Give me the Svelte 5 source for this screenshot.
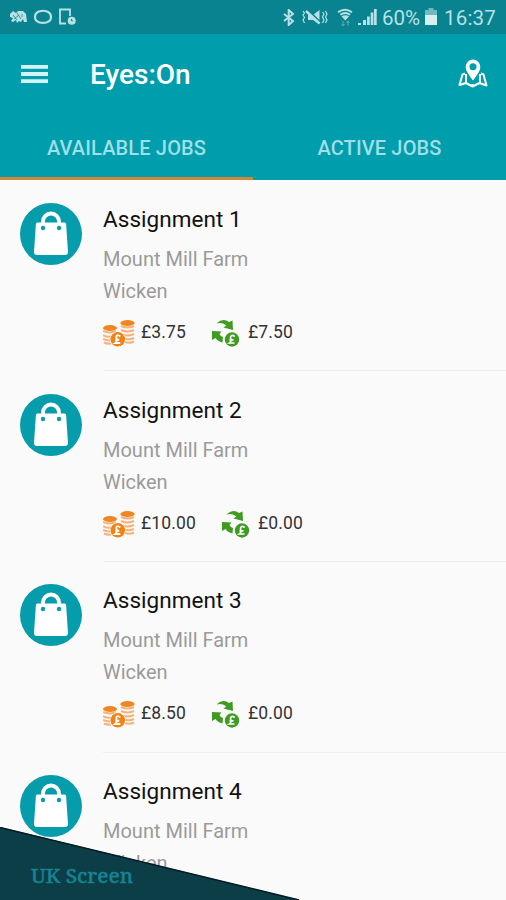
<script lang="ts">
	interface Job {
		name: string;
		place: string;
		town: string;
		fee?: string;
		refund?: string;
	}

	const tabs = ['Available jobs', 'Active jobs'];
	let activeTab = $state(0);

	const jobs: Job[] = [
		{ name: 'Assignment 1', place: 'Mount Mill Farm', town: 'Wicken', fee: '£3.75', refund: '£7.50' },
		{ name: 'Assignment 2', place: 'Mount Mill Farm', town: 'Wicken', fee: '£10.00', refund: '£0.00' },
		{ name: 'Assignment 3', place: 'Mount Mill Farm', town: 'Wicken', fee: '£8.50', refund: '£0.00' },
		{ name: 'Assignment 4', place: 'Mount Mill Farm', town: 'Wicken' }
	];
</script>

<div class="screen">
	<div class="status-bar">
		<div class="notifications">
			<svg width="19" height="16" viewBox="0 0 19 16" fill="currentColor">
				<path d="M1 5l3-3 3 2 2-2h5l3 3 1 8h-3l-1-3-2 3-2-1-2 2-1-3-3 2-2-1 2-3-3-1z" />
				<path d="M4 6l4 5M8 4l4 6M13 5v3M5 10l5-4" stroke="#148490" stroke-width="0.8" />
			</svg>
			<svg width="20" height="16" viewBox="0 0 20 16" fill="none" stroke="currentColor" stroke-width="2.2">
				<path d="M6 2.5q4-1.500 8 0q4 1.500 4 5.500t-4 5.200q-4 1.500-8 0q-4-1.200-4-5.200t4-5.500z" />
			</svg>
			<svg width="19" height="18" viewBox="0 0 19 18" fill="none" stroke="currentColor" stroke-width="1.800">
				<path d="M8 15.500H2V1.500h10V8" />
				<circle cx="13.700" cy="12.700" r="4" fill="currentColor" stroke="none" />
				<path d="M13.500 11v1.800h1.500" stroke="#148490" stroke-width="1" />
			</svg>
		</div>
		<div class="system">
			<svg class="bluetooth" width="12" height="17" viewBox="0 0 12 17" fill="none" stroke="currentColor" stroke-width="2">
				<path d="M1 5l9 7-4.300 4V1L10 5l-9 7" />
			</svg>
			<svg class="mute" width="27" height="17" viewBox="0 0 27 17" fill="none" stroke="currentColor" stroke-width="1.200">
				<path d="M2 2l1.500 2L2 6l1.500 2.500L2 11l1.500 3M21.500 3L23 5l-1.500 3 1.500 3-1.500 3M24.500 2L26 5l-1.500 3 1.500 3-1.500 3" />
				<path d="M7 6h5l6.500-5v14L12 11H7z" fill="currentColor" stroke="none" />
				<path d="M7.500 1.500l12 12" stroke="#08838f" stroke-width="2" />
				<path d="M5 2l13.500 12.500" stroke-width="2.400" />
			</svg>
			<svg class="wifi" width="17" height="19" viewBox="0 0 17 19" fill="none" stroke="currentColor" stroke-width="2">
				<path d="M1 4.200q7-5 14 0M3.300 6.700q5-3.500 9.700 0" />
				<path d="M4.500 8.200q3.800-2 7.600 0L8.300 12.500z" fill="currentColor" stroke="none" />
				<path d="M6 13v4M4.500 16L6 18l1.500-2M11 18v-4M9.500 15l1.500-2 1.500 2" stroke-width="1" opacity="0.450" />
			</svg>
			<svg class="signal" width="19" height="18" viewBox="0 0 19 18" fill="currentColor">
				<path d="M0 15h3v2H0zM5 12h3v5H5zM9 8.500h2.800V17H9zM12.700 4.500h2.700V17h-2.700zM16 1h2.700v16H16z" />
			</svg>
			<span class="percent">60%</span>
			<svg class="battery" width="12" height="18" viewBox="0 0 12 18" fill="currentColor">
				<path d="M3.500 0h5v2H12v5H0V2h3.500z" opacity="0.500" />
				<path d="M0 7h12v10H0z" />
			</svg>
			<span class="time">16:37</span>
		</div>
	</div>

	<header>
		<button class="menu-btn" aria-label="Menu">
			<svg width="27" height="20" viewBox="0 0 27 20" stroke="currentColor" stroke-width="3.800">
				<path d="M0 2.800h27M0 10h27M0 17.200h27" />
			</svg>
		</button>
		<h1>Eyes:On</h1>
		<button class="map-btn" aria-label="Map">
			<svg width="30" height="30" viewBox="0 0 30 30" fill="none" stroke="currentColor" stroke-width="2" stroke-linejoin="round">
				<path d="M7 14.500l-2.500 1L1.500 26l6.500-2 6.500 3.500 7-3.500 7 2.500-3-11-2.500-1M8 15v8.500M22 15v8.500M14.500 25v2" />
				<path d="M15 .5a7.300 7.300 0 0 0-7.300 7.400c0 4.600 4.300 9 7.300 13.600 3-4.600 7.300-9 7.300-13.600A7.300 7.300 0 0 0 15 .5zM15 4.200a3.500 3.500 0 1 1 0 7A3.500 3.500 0 0 1 15 4.200z" fill="currentColor" fill-rule="evenodd" stroke="none" />
			</svg>
		</button>
	</header>

	<nav>
		{#each tabs as tab, i}
			<button class="tab" class:active={activeTab === i} onclick={() => (activeTab = i)}>{tab}</button>
		{/each}
	</nav>

	<main>
		{#each jobs as job}
			<article>
				<svg class="bag" width="62" height="62" viewBox="0 0 62 62">
					<circle cx="31" cy="31" r="31" fill="#059dac" />
					<path d="M23 22v-3.500a8 8 0 0 1 16 0V22" fill="none" stroke="#fff" stroke-width="3.800" />
					<path d="M17.500 19.500h27q1.500 0 1.600 1.500L48 49q0 3-3 3H17q-3 0-3-3l1.900-28Q16 19.500 17.500 19.500z" fill="#fff" />
					<circle cx="23" cy="25" r="2.200" fill="#059dac" />
					<circle cx="39" cy="25" r="2.200" fill="#059dac" />
				</svg>
				<div class="details">
					<h2>{job.name}</h2>
					<p>{job.place}</p>
					<p>{job.town}</p>
					{#if job.fee}
						<div class="amounts">
							<svg class="coins" width="33" height="28" viewBox="0 0 33 28" fill="none">
								<path d="M18 7q6.500 3 13 0M18 11q6.500 3 13 0M18 15q6.500 3 13 0M20 19q6 2.500 11 0M22 23q5 1.500 9-.5M0 12q6.500 3 13 0M0 16q5 3 9.500 1M0 20q4 2 8 1.500M1 23.500q3 1.500 7 1" stroke="#f5b27c" stroke-width="2" />
								<ellipse cx="24.500" cy="4" rx="7.200" ry="3" fill="#ee8722" />
								<ellipse cx="7" cy="9" rx="7" ry="3" fill="#ee8722" />
								<circle cx="14.800" cy="20.300" r="8" fill="#fafafa" />
								<circle cx="14.800" cy="20.300" r="7.300" fill="#ee8316" />
								<path d="M17.300 17.500q-3.500-3-4 .5l.5 3q0 2-1.500 3h5M12.300 20.800h4" stroke="#fff" stroke-width="1.900" />
							</svg>
							<span class="amount">{job.fee}</span>
							<svg class="cycle" width="28" height="28" viewBox="0 0 28 28" fill="#409b22">
								<path d="M4.500 4.500Q11-1.500 17 3l3.500-1.500L21 11l-9.500-2.500 2.800-2Q10 3 4.500 4.500z" />
								<path d="M0 12l9.500.5-2 2.500q1 2.500 3.500 3l-.5 5.500q-5-1.500-7-4.500L0 21z" />
								<circle cx="20" cy="20.500" r="7.200" />
								<path d="M22.700 17.500q-3.700-2.500-4.200 1l.5 2.500q0 2-1.500 3h5M17.500 20.800h4" fill="none" stroke="#fff" stroke-width="1.700" />
							</svg>
							<span class="amount refund">{job.refund}</span>
						</div>
					{/if}
				</div>
			</article>
		{/each}
	</main>

	<div class="corner">
		<svg width="300" height="73" viewBox="0 0 300 73">
			<path d="M0 0L300 73H0z" fill="#0b3e46" />
			<path d="M0 .5L299 73" stroke="#031c23" stroke-width="1.500" />
		</svg>
		<span class="region">UK Screen</span>
	</div>
</div>

<style>
	:global(body) {
		margin: 0;
		background: #fafafa;
	}

	.screen {
		position: relative;
		width: 506px;
		height: 900px;
		overflow: hidden;
		display: flex;
		flex-direction: column;
		background: #fafafa;
		font-family: Roboto, 'Liberation Sans', sans-serif;
	}

	button {
		padding: 0;
		border: none;
		background: none;
		color: inherit;
		font: inherit;
		cursor: pointer;
	}

	svg {
		display: block;
		flex: none;
	}

	.status-bar {
		flex: none;
		height: 34px;
		box-sizing: border-box;
		padding: 0 10px 0 9px;
		display: flex;
		align-items: center;
		justify-content: space-between;
		background: #08838f;
		color: #b9e0e4;
	}

	.notifications,
	.system {
		display: flex;
		align-items: center;
	}

	.notifications {
		gap: 5px;
	}

	.bluetooth {
		margin-right: 6px;
	}

	.mute {
		margin-right: 9px;
	}

	.wifi {
		margin-right: 4px;
	}

	.signal {
		margin-right: 5px;
	}

	.percent,
	.time {
		font-size: 20.5px;
		line-height: 24px;
		padding-top: 2px;
	}

	.percent {
		width: 39px;
		margin-right: 4px;
	}

	.battery {
		color: #d5f0f0;
		margin-right: 7px;
	}

	.time {
		letter-spacing: 0.2px;
	}

	header {
		flex: none;
		height: 80px;
		box-sizing: border-box;
		padding: 0 18px 0 21px;
		display: flex;
		align-items: center;
		background: #009dad;
		color: white;
	}

	.menu-btn {
		color: #d5f3f5;
	}

	h1 {
		flex: 1;
		margin: 0 0 0 42px;
		padding-top: 2px;
		font-size: 28px;
		line-height: 32px;
		font-weight: 500;
	}

	nav {
		flex: none;
		height: 66px;
		display: flex;
		background: #009dad;
	}

	.tab {
		flex: 1;
		box-sizing: border-box;
		padding-top: 4px;
		border-bottom: 3px solid transparent;
		color: #9fdfe5;
		font-size: 20px;
		font-weight: 500;
		letter-spacing: 0.15px;
		text-transform: uppercase;
	}

	.tab.active {
		border-bottom-color: #cc8a39;
	}

	article {
		height: 190.6px;
		box-sizing: border-box;
		padding: 23px 0 0 20px;
		display: flex;
		align-items: flex-start;
		gap: 21px;
	}

	.details {
		flex: 1;
		height: 168.4px;
		box-sizing: border-box;
		border-bottom: 1px solid #edf0f1;
	}

	h2 {
		margin: 2px 0 10px;
		font-size: 22.5px;
		line-height: 28px;
		font-weight: 400;
		letter-spacing: 0.05px;
		color: #111;
	}

	p {
		margin: 0;
		font-size: 20px;
		line-height: 32px;
		color: #9a9a9a;
	}

	.amounts {
		display: flex;
		align-items: center;
		margin-top: 12px;
		height: 28px;
	}

	.amount {
		margin: -2px 0 0 5px;
		font-size: 17.5px;
		line-height: 24px;
		letter-spacing: 0.15px;
		color: #333;
	}

	.cycle {
		margin-left: 26px;
	}

	.refund {
		margin-left: 8px;
	}

	.corner {
		position: absolute;
		left: 0;
		bottom: 0;
	}

	.region {
		position: absolute;
		left: 31px;
		bottom: 11px;
		font-family: 'Noto Serif', 'DejaVu Serif', serif;
		font-size: 20.5px;
		font-weight: 500;
		line-height: 28px;
		color: #168493;
		-webkit-text-stroke: 0.4px #168493;
		white-space: nowrap;
	}
</style>
